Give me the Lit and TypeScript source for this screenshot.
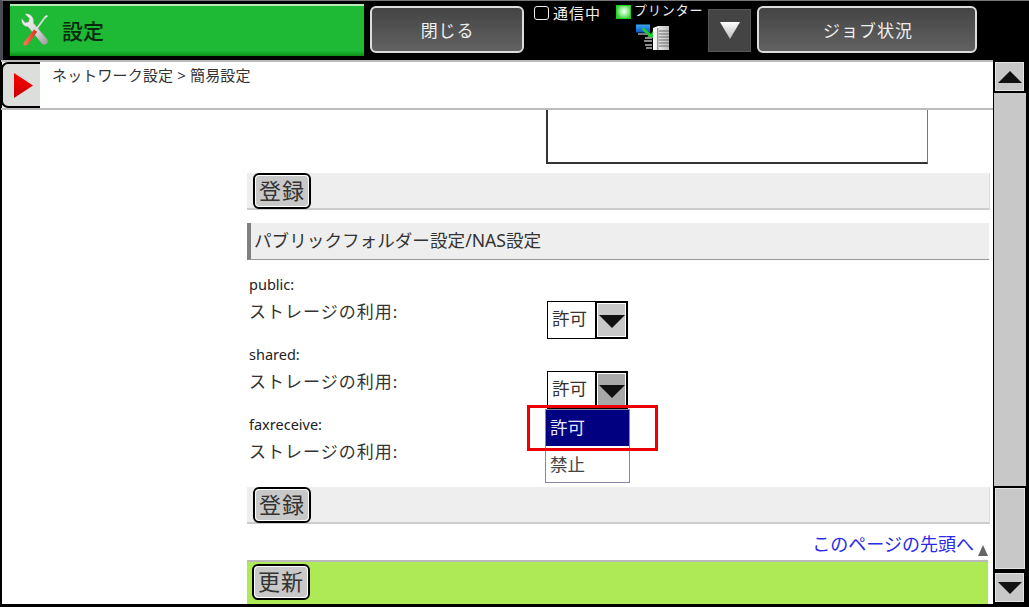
import { LitElement, html, css, svg } from "lit";
import { customElement } from "lit/decorators.js";

const toolsIcon = svg`<svg width="28" height="34" viewBox="0 0 28 34">
  <defs>
    <linearGradient id="w" x1="0" y1="0" x2="1" y2="1"><stop offset="0" stop-color="#fafafa"/><stop offset=".6" stop-color="#d4d4d4"/><stop offset="1" stop-color="#9a9a9a"/></linearGradient>
    <linearGradient id="b" x1="0" y1="0" x2="1" y2="0"><stop offset="0" stop-color="#ff7a5a"/><stop offset="1" stop-color="#d8301f"/></linearGradient>
  </defs>
  <path d="M3 1 L7.5 5.5 L6.5 9 L3 9.8 L-0.2 5.5 C-1 10 1.5 13.5 6 13.8 L19.5 30 C21.5 32.5 25.5 32 25.6 28.5 C25.6 27 25 26.2 24 25 L11.5 10 C12.5 5 8.5 0 3 1 Z" fill="url(#w)" stroke="#9a9a9a" stroke-width=".4" transform="translate(1 0)"/>
  <path d="M25 3 L14 18" stroke="#dcdcdc" stroke-width="1.8" fill="none"/>
  <path d="M25.6 2 L27 3 L25 4.8 L24 4 Z" fill="#f2f2f2"/>
  <path d="M13 16.5 L16.2 18.8 L7 31.4 C5.6 33 3 32.8 2.6 31.2 C2.2 30.2 2.8 29.2 3.4 28.4 Z" fill="url(#b)"/>
</svg>`;

const printerIcon = svg`<svg width="34" height="27" viewBox="0 0 34 27">
  <defs>
    <linearGradient id="s" x1="0" y1="0" x2="0" y2="1"><stop offset="0" stop-color="#39a9f2"/><stop offset="1" stop-color="#0a55c9"/></linearGradient>
    <linearGradient id="p" x1="0" y1="0" x2="1" y2="0"><stop offset="0" stop-color="#ffffff"/><stop offset="1" stop-color="#bdbdbd"/></linearGradient>
  </defs>
  <rect x="0" y="0.5" width="14" height="8" fill="url(#s)"/>
  <rect x="2" y="9" width="11" height="2" fill="#777"/>
  <path d="M7 3 L15 10 L17 7 L17 14 L10 14 L12.5 12 L6 6 Z" fill="#22cc33"/>
  <path d="M9 13h7v2h-7zM8 16h8v2h-8zM9 20h7v2h-7zM10 23h6v2h-6z" fill="#8a8a8a"/>
  <path d="M17 4 L22 2 L33 2 L33 26 L17 26 Z" fill="url(#p)"/>
  <path d="M23 7h10M23 10h10M23 13h10M23 16h10M23 19h10M23 22h10" stroke="#666" stroke-width="1"/>
  <rect x="21" y="4" width="1.5" height="22" fill="#999"/>
</svg>`;

@customElement("storage-select")
class StorageSelect extends LitElement {
  static properties = { pressed: { type: Boolean } };
  declare pressed: boolean;
  static styles = css`
    :host { display: inline-flex; height: 38px; width: 81px; }
    .val {
      width: 48px; box-sizing: border-box; border: 1px solid #000; border-right: none;
      padding-left: 4px; font-size: 17.5px; line-height: 32px; color: #333; background: #fff;
    }
    .arrow {
      width: 33px; box-sizing: border-box; border: 2px solid #000; outline: 1px solid #fff; outline-offset: -3px;
      background: #c8c8c8; display: flex; align-items: center; justify-content: center;
    }
    .arrow.pressed { background: #a8a8a8; }
    .tri { width: 0; height: 0; border-left: 13px solid transparent; border-right: 13px solid transparent; border-top: 13px solid #111; margin-top: 3px; }
  `;
  render() {
    return html`<div class="val">許可</div><div class="arrow ${this.pressed ? "pressed" : ""}"><div class="tri"></div></div>`;
  }
}

@customElement("app-root")
class AppRoot extends LitElement {
  static styles = css`
    :host {
      display: flex; flex-direction: column; width: 1029px; height: 607px; overflow: hidden;
      background: #000; position: relative;
      font-family: "Noto Sans", "Noto Sans CJK JP", sans-serif;
    }
    header {
      flex: none; border-top: 1px solid #777; border-left: 3px solid #4a4a55;
      display: flex; align-items: center; height: 59px;
    }
    .title {
      margin-left: 7px; width: 354px; height: 52px; box-sizing: border-box;
      background: linear-gradient(#b8e8b8 0 2px, #1eb935 2px, #1eb935 47px, #0a8f14 52px);
      display: flex; align-items: center; padding-left: 11px; gap: 13px;
      font-size: 21px; font-weight: 500; color: #062a0c; margin-top: -1px;
    }
    .hbtn {
      box-sizing: border-box; height: 47px; margin-top: -2px; border: 2px solid #ddd; border-radius: 6px;
      background: linear-gradient(#444, #626262); color: #eee;
      display: flex; align-items: center; justify-content: center;
    }
    .close { width: 154px; margin-left: 6px; font-size: 17px; letter-spacing: 0.8px; padding-left: 1px; }
    .job { width: 220px; margin-left: 6px; font-size: 17px; letter-spacing: 1px; padding-left: 2px; }
    .status { width: 174px; margin-left: 10px; height: 50px; color: #eee; align-self: flex-start; margin-top: 2px; }
    .status-top { display: flex; align-items: flex-start; }
    .check { width: 15px; height: 14px; box-sizing: border-box; border: 1.5px solid #eee; border-radius: 3px; margin-top: 3px; }
    .comm { font-size: 15px; line-height: 20px; margin-left: 4px; letter-spacing: 1px; width: 63px; }
    .led { width: 15px; height: 14px; box-sizing: border-box; margin-top: 2px; border: 1px solid #1fd01f;
      background: radial-gradient(circle at 55% 45%, #f4fff4 0, #a8f0a8 35%, #22c822 90%); }
    .prn { font-size: 13px; line-height: 15px; margin-left: 3px; letter-spacing: 0.9px; }
    .pico { margin: 1px 0 0 102px; display: block; height: 27px; }
    .drop {
      width: 43px; height: 43px; margin-top: -1px; box-sizing: border-box; background: #444; border: 1px solid #555;
      display: flex; align-items: center; justify-content: center;
    }
    .drop svg { display: block; }

    .body { flex: 1; display: flex; min-height: 0; padding-bottom: 3px; }
    .page { width: 993px; flex: none; box-sizing: border-box; background: #fff; display: flex; flex-direction: column; border-left: 2px solid #000; }
    .crumb {
      height: 50px; flex: none; box-sizing: border-box; border-top: 2px solid #bbb; border-bottom: 2px solid #bbb;
      display: flex; margin-left: -1px;
    }
    .tab {
      width: 39px; box-sizing: border-box; background: #dcdedc; border: 2px solid #000; border-right: none; border-radius: 7px 0 0 7px;
      display: flex; align-items: center; justify-content: center; padding-left: 5px;
    }
    .tab svg { display: block; }
    .path { margin-left: 12px; font-size: 15px; line-height: 27px; color: #333; letter-spacing: 0.15px; }
    .content { flex: 1; padding-left: 245px; padding-right: 3px; display: flex; flex-direction: column; min-height: 0; overflow: hidden; }
    .area { margin-left: 299px; width: 382px; height: 54px; flex: none; box-sizing: border-box; border-left: 2px solid #333; border-bottom: 2px solid #333; border-right: 1px solid #777; }
    .bar {
      margin-top: 9px; height: 37px; flex: none; box-sizing: border-box; background: #eee; border-bottom: 2px solid #ccc; border-right: 1px solid #ddd;
      padding-left: 6px;
    }
    .bar.flush { margin-top: 0; }
    .btn {
      display: flex; align-items: center; justify-content: center; width: 58px; height: 36px; box-sizing: border-box;
      border: 2px solid #000; border-radius: 6px; background: #c8c8c8; outline: 1px solid #fff; outline-offset: -3px;
      font-size: 22px; line-height: 30px; padding-bottom: 2px; color: #333; letter-spacing: 1px;
    }
    h2 {
      margin: 13px 1px 0 0; height: 37px; flex: none; box-sizing: border-box; background: #eee; border-left: 4px solid #808080; border-bottom: 1px solid #999;
      padding-left: 3px; font-size: 17.6px; font-weight: 400; line-height: 34px; color: #333; white-space: nowrap;
    }
    .groups { margin-top: 13px; height: 214px; flex: none; }
    .group { height: 70px; padding-left: 2px; display: grid; grid-template-columns: 298px 81px; grid-template-rows: 26px 38px; }
    .name { grid-column: 1 / 3; font-size: 14.5px; line-height: 22px; color: #222; }
    .label { font-size: 17px; line-height: 26px; color: #333; letter-spacing: 1px; white-space: nowrap; }
    .select-cell { margin-top: 2px; }
    .top { height: 36px; flex: none; display: flex; justify-content: flex-end; align-items: flex-end; gap: 4px; margin-right: 2px; color: #2a2ae8; font-size: 18px; line-height: 26px; padding-bottom: 3px; box-sizing: border-box; }
    .top i { width: 0; height: 0; border-left: 5.5px solid transparent; border-right: 5.5px solid transparent; border-bottom: 11px solid #666; margin-bottom: 1px; }
    .green { flex: 1; margin-right: 2px; box-sizing: border-box; background: #aeea55; border-top: 2px solid #bbb; padding: 3px 0 0 5px; }
    .green .btn { margin-top: -1px; }

    .scroll { flex: 1; box-sizing: border-box; padding: 2px 4px 0 2px; display: flex; flex-direction: column; }
    .sbtn { height: 29px; width: 29px; flex: none; box-sizing: border-box; background: #c8c8c8; border: 1px solid #e4e4e4; display: flex; align-items: center; justify-content: center; }
    .up { border-left: 12px solid transparent; border-right: 12px solid transparent; border-bottom: 12px solid #111; width: 0; height: 0; }
    .dn { border-left: 12px solid transparent; border-right: 12px solid transparent; border-top: 12px solid #111; width: 0; height: 0; }
    .track { height: 393px; margin: 2px -1px 0 -1px; flex: none; background: #c8c8c8; }
    .thumb { height: 81px; margin-top: 2px; flex: none; box-sizing: border-box; background: #c8c8c8; border: 1px solid #e4e4e4; }
    .sdown { margin-top: 4px; }

    .menu { position: absolute; left: 545px; top: 409px; width: 85px; height: 74px; box-sizing: border-box; background: #fff; border: 1px solid #8a84a8; font-size: 17.5px; }
    .opt { height: 36px; line-height: 35px; padding-left: 4px; color: #444; }
    .opt.sel { background: #000080; color: #e8e8ff; margin-bottom: 1px; }
    .mark { position: absolute; left: 527px; top: 405px; width: 131px; height: 46px; box-sizing: border-box; border: 3px solid #ee0000; pointer-events: none; }
  `;

  private group(name: string, pressed = false, covered = false) {
    return html`<div class="group">
      <div class="name">${name}</div>
      <div class="label">ストレージの利用:</div>
      <div class="select-cell">${covered ? "" : html`<storage-select ?pressed=${pressed}></storage-select>`}</div>
    </div>`;
  }

  render() {
    return html`
      <header>
        <div class="title">${toolsIcon}<span>設定</span></div>
        <div class="hbtn close">閉じる</div>
        <div class="status">
          <div class="status-top">
            <div class="check"></div><div class="comm">通信中</div>
            <div class="led"></div><div class="prn">プリンター</div>
          </div>
          <div class="pico">${printerIcon}</div>
        </div>
        <div class="drop"><svg width="20" height="17" viewBox="0 0 20 17"><defs><linearGradient id="d" x1="0" y1="0" x2="0" y2="1"><stop offset="0" stop-color="#ffffff"/><stop offset="1" stop-color="#bbbbbb"/></linearGradient></defs><path d="M0 0 H20 L10 17 Z" fill="url(#d)"/></svg></div>
        <div class="hbtn job">ジョブ状況</div>
      </header>
      <div class="body">
        <div class="page">
          <div class="crumb">
            <div class="tab"><svg width="20" height="25" viewBox="0 0 20 25"><defs><linearGradient id="r" x1="0" y1="0" x2="0" y2="1"><stop offset="0" stop-color="#ff0000"/><stop offset="1" stop-color="#c80000"/></linearGradient></defs><path d="M0 0 L19 12.5 L0 25 Z" fill="url(#r)"/></svg></div>
            <div class="path">ネットワーク設定 &gt; 簡易設定</div>
          </div>
          <div class="content">
            <div class="area"></div>
            <div class="bar"><div class="btn">登録</div></div>
            <h2>パブリックフォルダー設定/NAS設定</h2>
            <div class="groups">
              ${this.group("public:")}
              ${this.group("shared:", true)}
              ${this.group("faxreceive:", false, true)}
            </div>
            <div class="bar flush"><div class="btn">登録</div></div>
            <div class="top"><span>このページの先頭へ</span><i></i></div>
            <div class="green"><div class="btn">更新</div></div>
          </div>
        </div>
        <div class="scroll">
          <div class="sbtn"><div class="up"></div></div>
          <div class="track"></div>
          <div class="thumb"></div>
          <div class="sbtn sdown"><div class="dn"></div></div>
        </div>
      </div>
      <div class="menu"><div class="opt sel">許可</div><div class="opt">禁止</div></div>
      <div class="mark"></div>
    `;
  }
}
